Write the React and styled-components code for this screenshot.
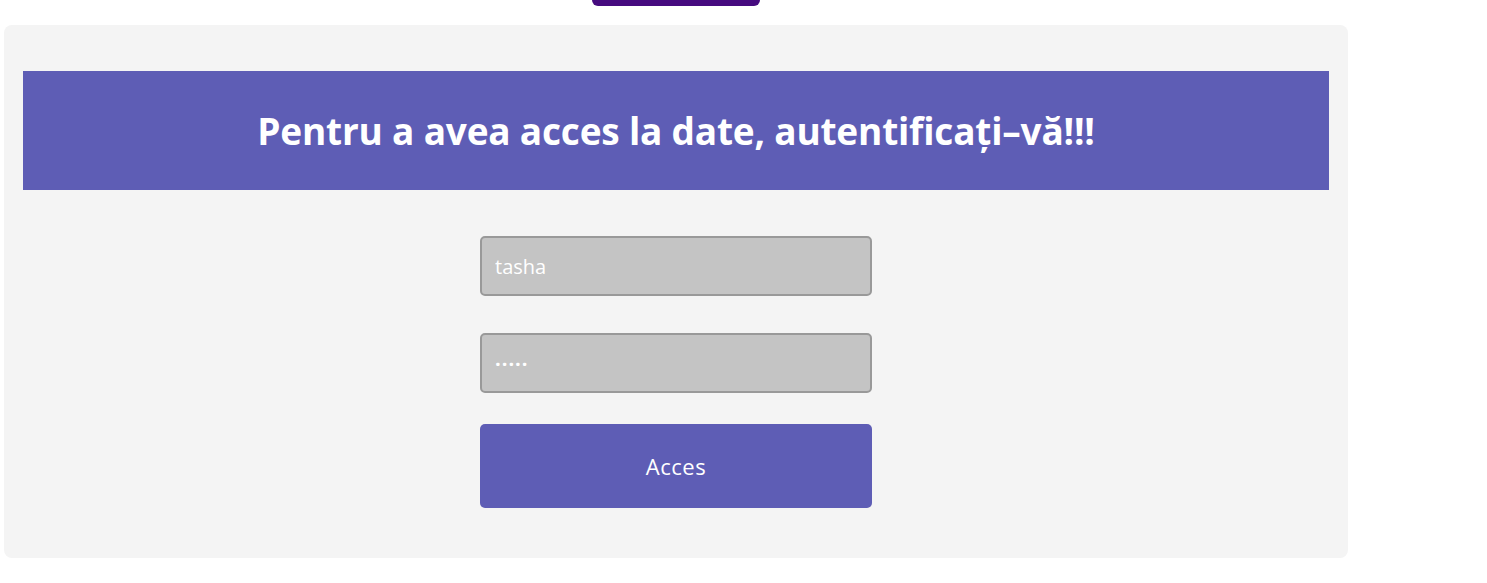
import React from "react";
import styled, { createGlobalStyle } from "styled-components";

const Global = createGlobalStyle`
  html, body { margin: 0; padding: 0; background: #ffffff; }
  body { font-family: "Open Sans", "Lato", sans-serif; }
`;

const Page = styled.div`
  width: 1344px;
  padding-left: 4px;
  display: flex;
  flex-direction: column;
  align-items: center;
`;

const TopTab = styled.div`
  width: 168px;
  height: 6px;
  background: #460b7f;
  border-radius: 0 0 6px 6px;
  margin-bottom: 19px;
`;

const Card = styled.div`
  align-self: stretch;
  background: #f4f4f4;
  border-radius: 8px;
  padding: 46px 19px 50px;
  display: flex;
  flex-direction: column;
  align-items: center;
`;

const Banner = styled.div`
  align-self: stretch;
  height: 119px;
  background: #5e5db5;
  display: flex;
  align-items: center;
  justify-content: center;
`;

const Title = styled.h1`
  margin: 0;
  color: #ffffff;
  font-family: "Open Sans", sans-serif;
  font-weight: 700;
  font-size: 37px;
  letter-spacing: -0.2px;
`;

const Form = styled.form`
  margin-top: 46px;
  width: 392px;
  display: flex;
  flex-direction: column;
`;

const Field = styled.input`
  box-sizing: border-box;
  width: 100%;
  height: 60px;
  margin-bottom: ${(p) => p.$gap}px;
  background: #c4c4c4;
  border: 2px solid #999999;
  border-radius: 5px;
  padding: 0 13px;
  color: #ffffff;
  font-family: "Open Sans", sans-serif;
  font-size: 20px;
  font-weight: ${(p) => (p.$dots ? 700 : 400)};
  letter-spacing: ${(p) => (p.$dots ? 1 : 0)}px;
  outline: none;
`;

const Submit = styled.button`
  width: 100%;
  height: 84px;
  background: #5e5db5;
  border: none;
  border-radius: 5px;
  color: #ffffff;
  font-family: "Open Sans", sans-serif;
  font-size: 22px;
  letter-spacing: 0.5px;
  cursor: pointer;
`;

export default function App() {
  return (
    <>
      <Global />
      <Page>
        <TopTab />
        <Card>
          <Banner>
            <Title>Pentru a avea acces la date, autentificați–vă!!!</Title>
          </Banner>
          <Form onSubmit={(e) => e.preventDefault()}>
            <Field $gap={37} type="text" defaultValue="tasha" />
            <Field $gap={31} $dots type="text" defaultValue="·····" />
            <Submit type="submit">Acces</Submit>
          </Form>
        </Card>
      </Page>
    </>
  );
}
